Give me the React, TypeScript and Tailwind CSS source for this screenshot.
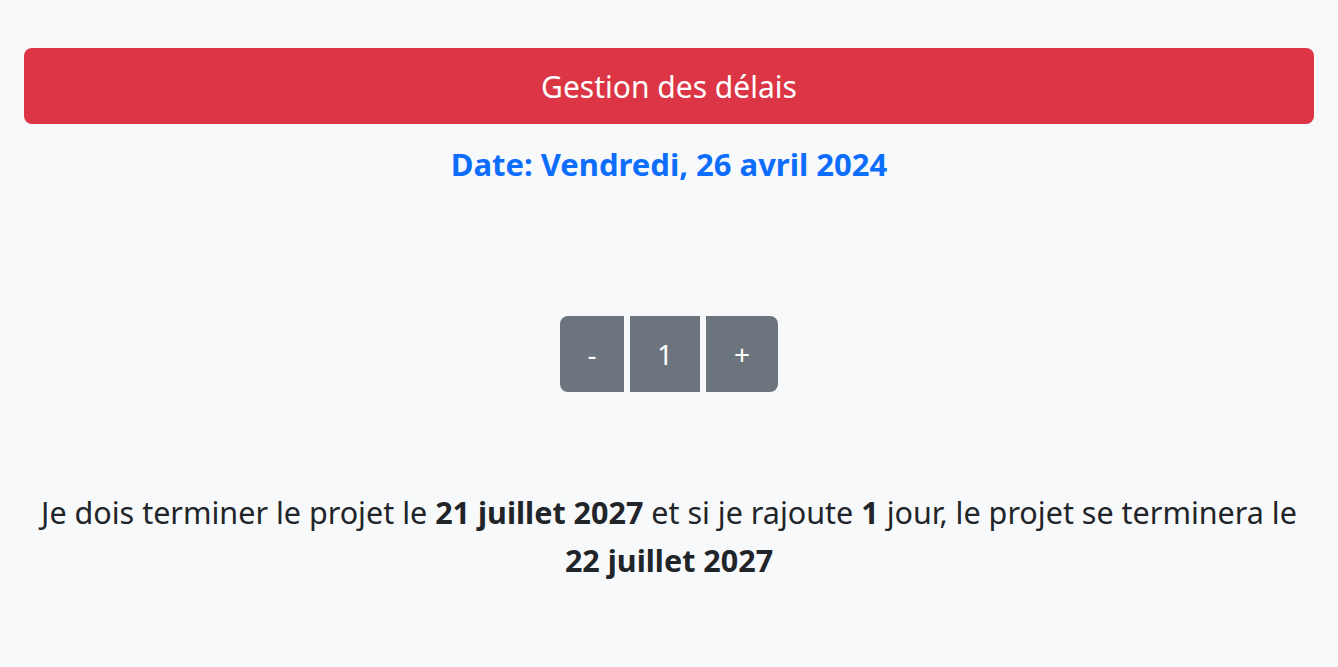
import React, { useState } from "react";

const font = { fontFamily: '"Noto Sans", "Open Sans", sans-serif' };

export default function App() {
  const [days, setDays] = useState(1);

  return (
    <div className="min-h-[667px] bg-[#f8f9fa] px-6 pt-12" style={font}>
      <div className="flex h-[76px] items-center justify-center rounded-lg bg-[#dc3545] text-[30px] text-white">
        Gestion des délais
      </div>

      <h3 className="mt-[20px] text-center text-[31px] font-bold leading-[40px] text-[#0d6efd]">
        Date: Vendredi, 26 avril 2024
      </h3>

      <div className="mt-[132px] flex justify-center gap-[6px]">
        <button
          className="h-[76px] w-[64px] rounded-l-lg bg-[#6c757d] text-[28px] text-white"
          onClick={() => setDays(days - 1)}
        >
          -
        </button>
        <div className="flex h-[76px] w-[70px] items-center justify-center bg-[#6c757d] text-[28px] text-white">
          {days}
        </div>
        <button
          className="h-[76px] w-[72px] rounded-r-lg bg-[#6c757d] text-[28px] text-white"
          onClick={() => setDays(days + 1)}
        >
          +
        </button>
      </div>

      <p className="mt-[96px] text-center text-[30.5px] leading-[48px] text-[#212529]">
        Je dois terminer le projet le <b>21 juillet 2027</b> et si je rajoute{" "}
        <b>{days}</b> jour, le projet se terminera le{" "}
        <b className="whitespace-nowrap">22 juillet 2027</b>
      </p>
    </div>
  );
}
